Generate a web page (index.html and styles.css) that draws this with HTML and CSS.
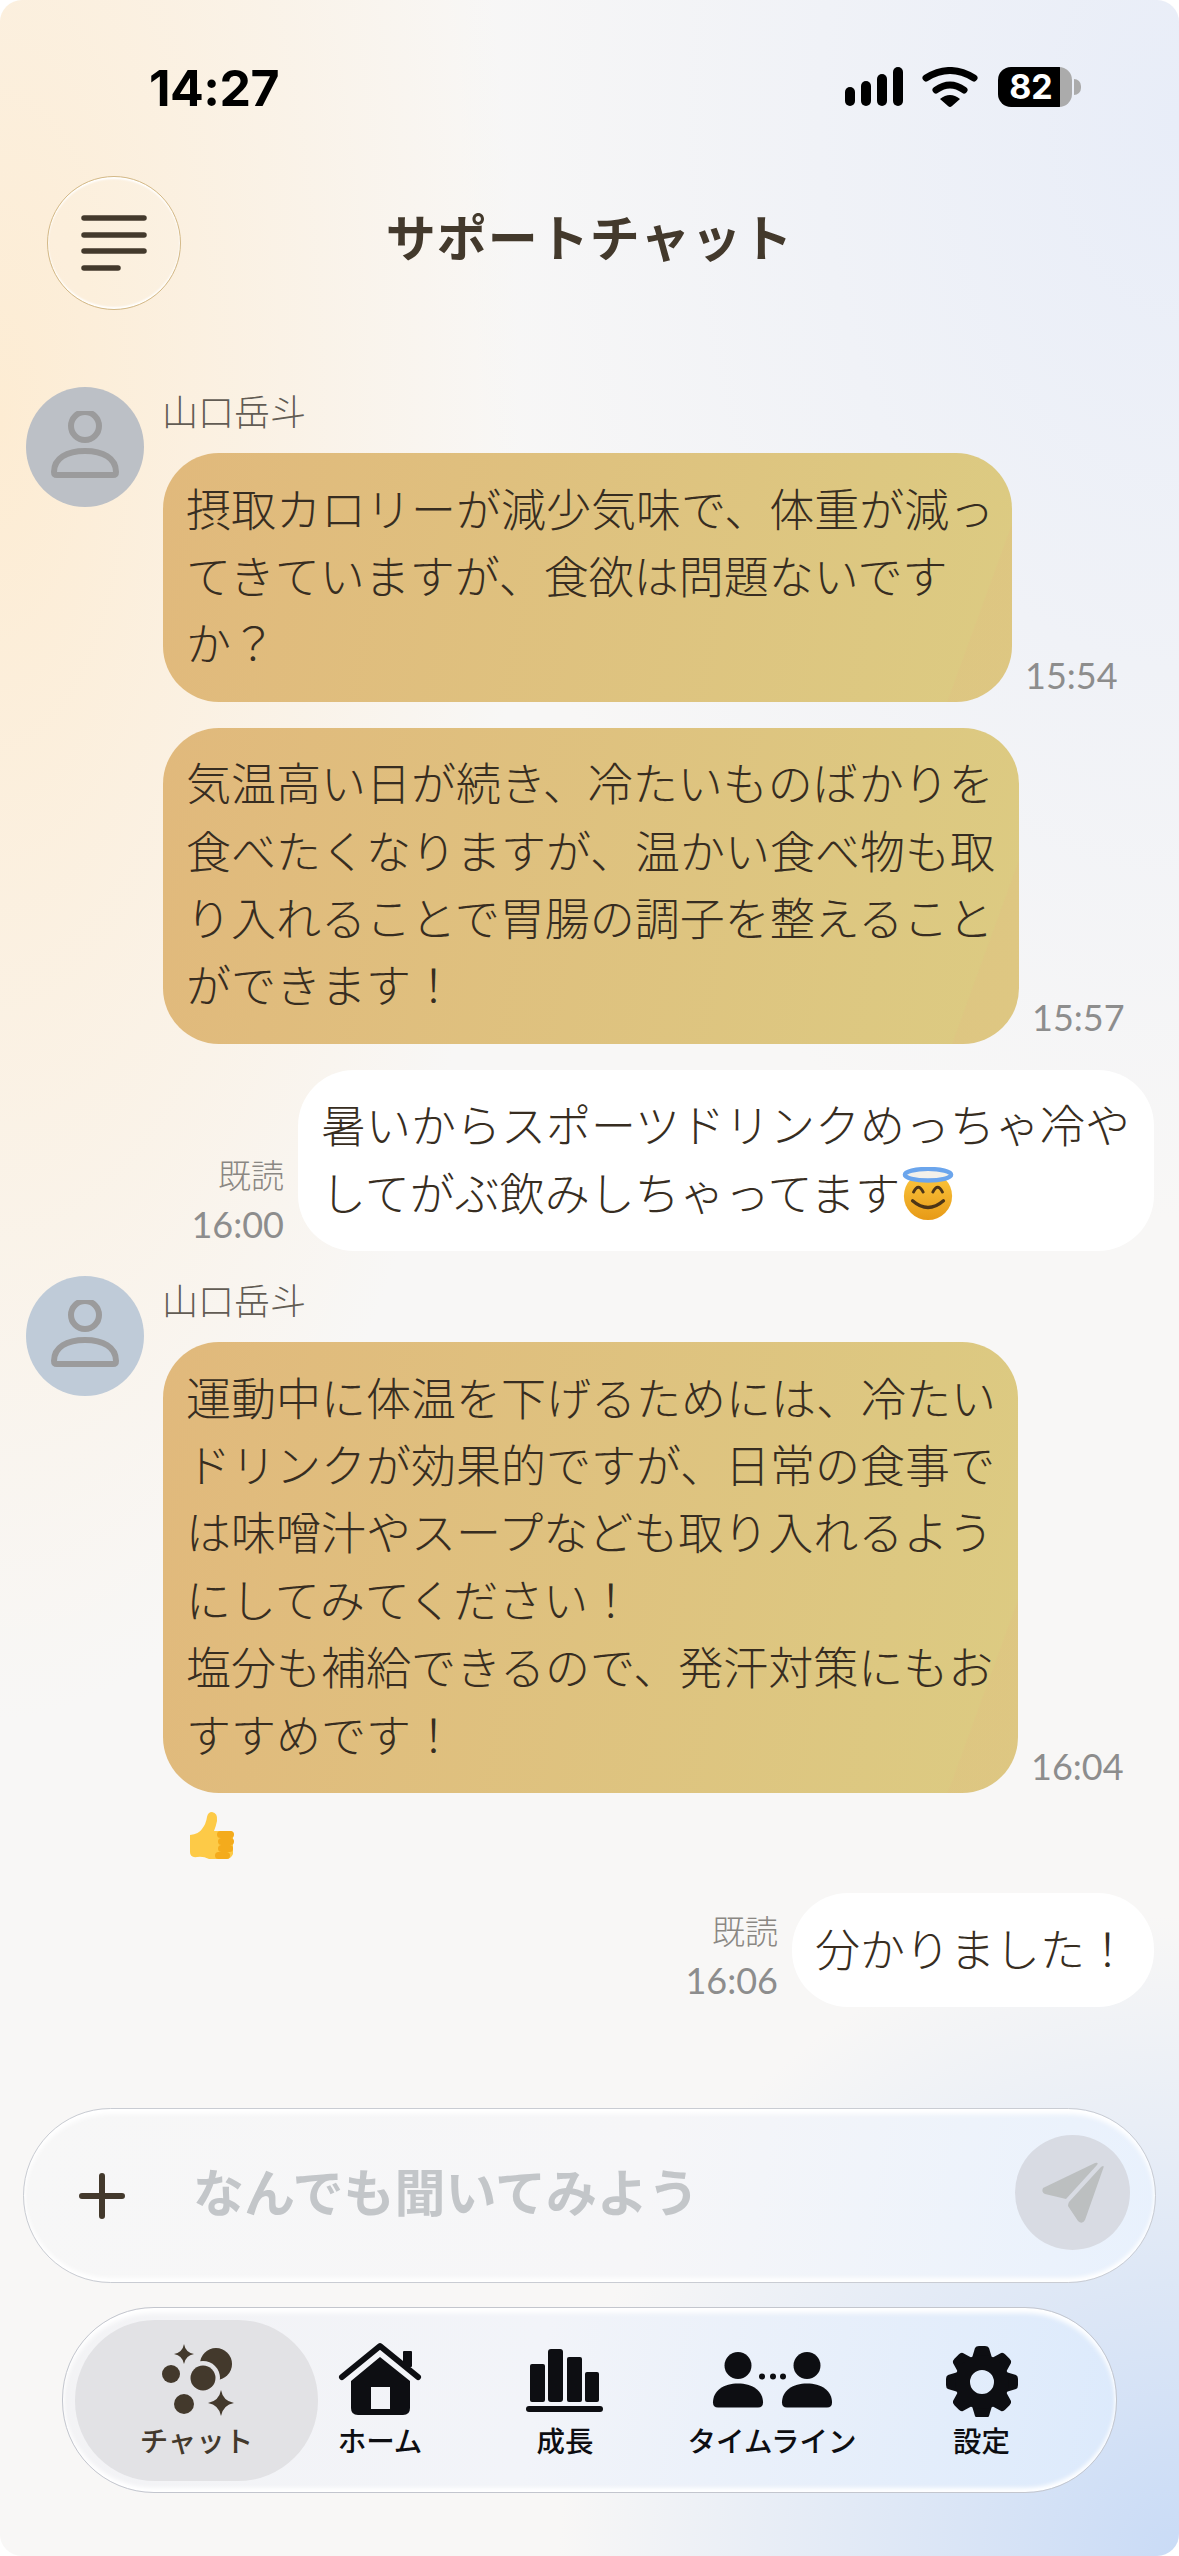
FILE: index.html
```html
<!DOCTYPE html>
<html lang="ja">
<head>
    <meta charset="utf-8">
    <title>サポートチャット</title>
    <link rel="stylesheet" href="styles.css">
</head>
<body>
    <div class="screen">
        <!-- ステータスバー -->
        <div class="status">
            <span class="clock">14:27</span>
            <div class="status-icons">
                <svg class="signal" width="58" height="40" viewBox="0 0 58 40">
                    <rect x="0" y="20" width="10" height="19" rx="5"/>
                    <rect x="16" y="14" width="10" height="25" rx="5"/>
                    <rect x="32" y="7" width="10" height="32" rx="5"/>
                    <rect x="48" y="0" width="10" height="39" rx="5"/>
                </svg>
                <svg class="wifi" width="56" height="40" viewBox="0 0 56 40">
                    <path d="M4 11Q28 -4 52 11" fill="none" stroke="#000" stroke-width="7" stroke-linecap="round"/>
                    <path d="M14 23Q28 13 42 23" fill="none" stroke="#000" stroke-width="7" stroke-linecap="round"/>
                    <path d="M18 32Q28 24 38 32L30 39Q28 41 26 39Z"/>
                </svg>
                <div class="battery"><span class="battery-level">82</span></div>
                <span class="battery-nub"></span>
            </div>
        </div>

        <!-- ヘッダー -->
        <header class="header">
            <button class="menu-btn">
                <svg width="66" height="58" viewBox="0 0 66 58">
                    <g stroke="#43392c" stroke-width="5.5" stroke-linecap="round">
                        <line x1="3" y1="4" x2="63" y2="4"/>
                        <line x1="3" y1="21" x2="63" y2="21"/>
                        <line x1="3" y1="37" x2="63" y2="37"/>
                        <line x1="3" y1="54" x2="37" y2="54"/>
                    </g>
                </svg>
            </button>
            <h1 class="title">サポートチャット</h1>
        </header>

        <!-- メッセージ一覧 -->
        <main class="chat">
            <div class="msg">
                <div class="avatar avatar-warm">
                    <svg width="72" height="72" viewBox="0 0 72 72" fill="none" stroke="#9b9b9c" stroke-width="6">
                        <circle cx="36" cy="15" r="14"/>
                        <path d="M5 61C5 47 18 40 36 40S67 47 67 61Q67 64 64 64H8Q5 64 5 61Z"/>
                    </svg>
                </div>
                <div class="msg-body">
                    <div class="name">山口岳斗</div>
                    <div class="bubble-row">
                        <div class="bubble coach w-849">摂取カロリーが減少気味で、体重が減っ<br>てきていますが、食欲は問題ないです<br>か？</div>
                        <span class="time">15:54</span>
                    </div>
                    <div class="bubble-row next">
                        <div class="bubble coach w-856">気温高い日が続き、冷たいものばかりを<br>食べたくなりますが、温かい食べ物も取<br>り入れることで胃腸の調子を整えること<br>ができます！</div>
                        <span class="time">15:57</span>
                    </div>
                </div>
            </div>

            <div class="mine">
                <div class="stamp"><span class="read">既読</span><span class="time">16:00</span></div>
                <div class="bubble me w-856">暑いからスポーツドリンクめっちゃ冷や<br>してがぶ飲みしちゃってます<svg class="emoji" width="54" height="54" viewBox="0 0 56 56">
                        <defs>
                            <linearGradient id="face" x1="0" y1="0" x2="0" y2="1">
                                <stop offset="0" stop-color="#fcc83f"/>
                                <stop offset="1" stop-color="#e79a17"/>
                            </linearGradient>
                        </defs>
                        <circle cx="28" cy="30" r="25" fill="url(#face)"/>
                        <path d="M13 26Q18 16 23 26M33 26Q38 16 43 26" fill="none" stroke="#4c3517" stroke-width="3" stroke-linecap="round"/>
                        <path d="M12 35Q28 49 44 35" fill="none" stroke="#4c3517" stroke-width="3.5" stroke-linecap="round"/>
                        <ellipse cx="28" cy="8" rx="24" ry="6" fill="#f3f1ea" stroke="#6ba5ec" stroke-width="4.5"/>
                    </svg></div>
            </div>

            <div class="msg">
                <div class="avatar avatar-cool">
                    <svg width="72" height="72" viewBox="0 0 72 72" fill="none" stroke="#9b9b9c" stroke-width="6">
                        <circle cx="36" cy="15" r="14"/>
                        <path d="M5 61C5 47 18 40 36 40S67 47 67 61Q67 64 64 64H8Q5 64 5 61Z"/>
                    </svg>
                </div>
                <div class="msg-body">
                    <div class="name">山口岳斗</div>
                    <div class="bubble-row">
                        <div class="bubble coach w-855">運動中に体温を下げるためには、冷たい<br>ドリンクが効果的ですが、日常の食事で<br>は味噌汁やスープなども取り入れるよう<br>にしてみてください！<br>塩分も補給できるので、発汗対策にもお<br>すすめです！</div>
                        <span class="time">16:04</span>
                    </div>
                    <div class="reaction">
                        <svg width="46" height="48" viewBox="0 0 46 48">
                            <path d="M1 23Q10 22 13 17Q17 12 18 5Q19 0 23 0Q29 1 28 9Q27 14 25 19H42Q45 20 44 25V42Q42 47 37 47H20Q14 44 8 45Q1 46 1 40Z" fill="#fdca47"/>
                            <g fill="#f4ab1c">
                                <rect x="28" y="19" width="17" height="7" rx="3.5"/>
                                <rect x="29" y="26" width="16" height="7" rx="3.5"/>
                                <rect x="29" y="33" width="15" height="7" rx="3.5"/>
                                <rect x="26" y="40" width="15" height="7" rx="3.5"/>
                            </g>
                        </svg>
                    </div>
                </div>
            </div>

            <div class="mine mine-last">
                <div class="stamp"><span class="read">既読</span><span class="time">16:06</span></div>
                <div class="bubble me">分かりました！</div>
            </div>
        </main>

        <!-- 入力欄 -->
        <div class="composer">
            <svg class="plus" width="46" height="46" viewBox="0 0 46 46">
                <path d="M23 3V43M3 23H43" stroke="#43392c" stroke-width="6" stroke-linecap="round"/>
            </svg>
            <span class="placeholder">なんでも聞いてみよう</span>
            <button class="send">
                <svg width="64" height="64" viewBox="0 0 64 64" fill="#bcbfc0">
                    <path d="M2 27Q0 31 4 33L25 38L56 4Q58 1 54 2Z"/>
                    <path d="M28 41L60 6Q64 3 62 8L44 59Q41 64 37 60L27 45Q27 43 28 41Z"/>
                </svg>
            </button>
        </div>

        <!-- タブバー -->
        <nav class="tabbar">
            <div class="tab tab-chat active">
                <svg width="76" height="76" viewBox="0 -3 76 76">
                    <g fill="#43392c">
                        <path d="M25 0Q26.5 8.5 35 10Q26.5 11.5 25 20Q23.5 11.5 15 10Q23.5 8.5 25 0Z"/>
                        <path d="M62 46Q64 57 75 59Q64 61 62 72Q60 61 49 59Q60 57 62 46Z"/>
                        <circle cx="57" cy="20" r="16"/>
                        <circle cx="44" cy="34" r="17" fill="#e2e2e5"/>
                        <circle cx="12" cy="30" r="9"/>
                        <circle cx="44" cy="34" r="12.5"/>
                        <circle cx="25" cy="60" r="10"/>
                    </g>
                </svg>
                <span>チャット</span>
            </div>
            <div class="tab tab-home">
                <svg width="84" height="76" viewBox="0 -1 84 76" fill="#0d0e12">
                    <path d="M4 35L42 4L80 35" fill="none" stroke="#0d0e12" stroke-width="6" stroke-linecap="round" stroke-linejoin="round"/>
                    <rect x="65" y="9" width="9" height="16" rx="1"/>
                    <path fill-rule="evenodd" d="M42 15L72 39V66Q72 73 65 73H20Q13 73 13 66V39ZM33 45V67H52V45Z"/>
                </svg>
                <span>ホーム</span>
            </div>
            <div class="tab tab-growth">
                <svg width="78" height="76" viewBox="0 -8 78 76" fill="#0d0e12">
                    <rect x="4" y="15" width="15" height="38" rx="2"/>
                    <rect x="22" y="0" width="15" height="53" rx="3"/>
                    <rect x="41" y="8" width="15" height="45" rx="2"/>
                    <rect x="59" y="23" width="14" height="30" rx="2"/>
                    <rect x="0" y="57" width="77" height="6" rx="3"/>
                </svg>
                <span>成長</span>
            </div>
            <div class="tab tab-timeline">
                <svg width="122" height="76" viewBox="0 -9.5 122 76" fill="#0d0e12">
                    <circle cx="27" cy="15" r="13.5"/>
                    <path d="M2 52C2 40 13 33 27 33S52 40 52 52Q52 57 47 57H7Q2 57 2 52Z"/>
                    <circle cx="96" cy="15" r="13.5"/>
                    <path d="M71 52C71 40 82 33 96 33S121 40 121 52Q121 57 116 57H76Q71 57 71 52Z"/>
                    <circle cx="51" cy="26" r="3"/>
                    <circle cx="62" cy="26" r="3"/>
                    <circle cx="72" cy="26" r="3"/>
                </svg>
                <span>タイムライン</span>
            </div>
            <div class="tab tab-setting">
                <svg width="76" height="76" viewBox="-38 -41 76 76">
                    <defs>
                        <path id="tooth" d="M-10 -24L-7 -34Q-6 -36 -3 -36H3Q6 -36 7 -34L10 -24Z"/>
                    </defs>
                    <g fill="#0d0e12">
                        <use href="#tooth"/>
                        <use href="#tooth" transform="rotate(45)"/>
                        <use href="#tooth" transform="rotate(90)"/>
                        <use href="#tooth" transform="rotate(135)"/>
                        <use href="#tooth" transform="rotate(180)"/>
                        <use href="#tooth" transform="rotate(225)"/>
                        <use href="#tooth" transform="rotate(270)"/>
                        <use href="#tooth" transform="rotate(315)"/>
                    </g>
                    <circle r="19.5" fill="none" stroke="#0d0e12" stroke-width="15"/>
                </svg>
                <span>設定</span>
            </div>
        </nav>
    </div>
</body>
</html>
```

FILE: styles.css
```css
* {
    box-sizing: border-box;
}
html, body {
    margin: 0;
    padding: 0;
    background: #fff;
}
body {
    font-family: "Noto Sans CJK JP", "Noto Sans", sans-serif;
    color: #43392c;
}
.screen {
    width: 1179px;
    height: 2556px;
    display: flex;
    flex-direction: column;
    overflow: hidden;
    border-radius: 22px;
    background:
        radial-gradient(ellipse 620px 640px at 100% 100%, #c9dbf6 0, rgba(201, 219, 246, 0) 100%),
        radial-gradient(ellipse 520px 1300px at 0 420px, #fdecd3 0, rgba(253, 236, 211, 0) 100%),
        radial-gradient(ellipse 720px 1100px at 100% 120px, #e8edf8 0, rgba(232, 237, 248, 0) 100%),
        #f8f7f6;
}

/* ステータスバー */
.status {
    height: 176px;
    flex-shrink: 0;
    display: flex;
    justify-content: space-between;
    padding: 57px 98px 0 149px;
}
.clock {
    font-family: Inter, "Liberation Sans", sans-serif;
    font-size: 50px;
    font-weight: 700;
    line-height: 62px;
    letter-spacing: -0.5px;
    color: #000;
}
.status-icons {
    display: flex;
    align-items: flex-start;
    padding-top: 10px;
}
.signal {
    margin-right: 19px;
}
.wifi {
    margin-right: 20px;
}
.battery {
    width: 74px;
    height: 40px;
    border-radius: 13px;
    background: linear-gradient(90deg, #000 0, #000 84%, #ababab 84%, #ababab 100%);
}
.battery-level {
    display: block;
    width: 66px;
    text-align: center;
    font-family: Inter, "Liberation Sans", sans-serif;
    font-size: 34px;
    font-weight: 700;
    line-height: 40px;
    color: #fff;
}
.battery-nub {
    width: 7px;
    height: 16px;
    margin: 12px 0 0 2px;
    border-radius: 0 8px 8px 0;
    background: #ababab;
}

/* ヘッダー */
.header {
    flex-shrink: 0;
    display: grid;
    grid-template-columns: 134px 1fr 134px;
    align-items: center;
    padding: 0 47px;
}
.menu-btn {
    width: 134px;
    height: 134px;
    padding: 0;
    display: flex;
    align-items: center;
    justify-content: center;
    border: 1.5px solid #d3b988;
    border-radius: 50%;
    background: rgba(255, 255, 255, 0.08);
    box-shadow: inset 0 2px 2px #fff, inset 0 -2px 2px #fff;
}
.title {
    margin: 0;
    padding-bottom: 16px;
    text-align: center;
    font-size: 50px;
    font-weight: 700;
    line-height: 70px;
    letter-spacing: 1px;
}

/* メッセージ */
.chat {
    flex: 1;
    padding: 77px 25px 0 26px;
}
.msg {
    display: flex;
    gap: 19px;
}
.avatar {
    width: 118px;
    height: 120px;
    flex-shrink: 0;
    display: flex;
    align-items: center;
    justify-content: center;
    border-radius: 50%;
}
.avatar-warm {
    background: #bcc0c6;
}
.avatar-cool {
    background: #bfcbd8;
}
.msg-body {
    flex: 1;
    min-width: 0;
}
.name {
    margin-left: -1px;
    font-size: 36px;
    font-weight: 300;
    line-height: 46px;
    height: 66px;
    color: #625c54;
}
.bubble-row {
    display: flex;
    align-items: flex-end;
    gap: 13px;
}
.bubble-row.next {
    margin-top: 26px;
}
.bubble {
    padding: 20.5px 0 26px 23px;
    border-radius: 56px;
    font-size: 45px;
    font-weight: 300;
    line-height: 67.4px;
    white-space: nowrap;
    color: #372d21;
}
.coach {
    background:
        linear-gradient(110deg, rgba(0, 0, 0, 0) 93%, rgba(225, 190, 130, 0.3) 93.2%),
        linear-gradient(100deg, #e1b97c 0, #dccb82 100%);
}
.me {
    background: #fff;
    padding-right: 24px;
}
.w-849 {
    width: 849px;
}
.w-855 {
    width: 855px;
}
.w-856 {
    width: 856px;
}
.time {
    font-family: Lato, "Liberation Sans", sans-serif;
    font-size: 36px;
    line-height: 40px;
    padding-bottom: 7px;
    color: #8d8d8d;
}
.mine {
    display: flex;
    justify-content: flex-end;
    align-items: flex-end;
    gap: 14px;
    margin: 26px 0 25px;
}
.mine-last {
    margin: 33px 0 0;
}
.stamp {
    display: flex;
    flex-direction: column;
    align-items: flex-end;
}
.stamp .read {
    font-size: 33px;
    font-weight: 300;
    line-height: 42px;
    height: 51px;
    color: #8a8783;
}
.stamp .time {
    padding-bottom: 7px;
}
.emoji {
    vertical-align: -10px;
    margin-left: 1px;
}
.reaction {
    height: 48px;
    margin: 19px 0 0 26px;
}

/* 入力欄 */
.composer {
    flex-shrink: 0;
    width: 1133px;
    height: 175px;
    margin-left: 23px;
    display: flex;
    align-items: center;
    padding: 0 25px 0 55px;
    border: 1.5px solid #c9ccd3;
    border-radius: 88px;
    background: linear-gradient(100deg, #f7f7f7 0, #f6f6f8 55%, #e8f1fd 100%);
    box-shadow: inset 0 5px 5px #fff, inset 0 -4px 4px #fff;
}
.plus {
    flex-shrink: 0;
}
.placeholder {
    margin-left: 68px;
    padding-bottom: 12px;
    flex: 1;
    font-size: 51px;
    font-weight: 700;
    line-height: 70px;
    color: #c3c6c9;
}
.send {
    width: 115px;
    height: 115px;
    margin-bottom: 6px;
    padding: 0;
    display: flex;
    align-items: center;
    justify-content: center;
    border: 0;
    border-radius: 50%;
    background: #d8dbe3;
}

/* タブバー */
.tabbar {
    flex-shrink: 0;
    width: 1055px;
    height: 186px;
    margin: 24px 0 63px 62px;
    display: flex;
    align-items: center;
    padding: 0 0 0 12px;
    border: 1.5px solid #c3c6ce;
    border-radius: 92px;
    background: linear-gradient(100deg, #f3f3f5 0, #f2f4f9 45%, #dceafc 100%);
    box-shadow: inset 0 5px 5px #fff, inset 0 -4px 4px #fff;
}
.tab {
    height: 161px;
    flex-shrink: 0;
    display: flex;
    flex-direction: column;
    align-items: center;
    padding-top: 21px;
    font-size: 28.5px;
    font-weight: 500;
    line-height: 40px;
    white-space: nowrap;
    color: #0d0e12;
}
.tab svg {
    flex-shrink: 0;
}
.tab span {
    margin-top: 3px;
}
.tab.active {
    color: #43392c;
    background: #e2e2e5;
    border-radius: 80px;
}
.tab-chat {
    width: 243px;
}
.tab-home {
    width: 124px;
}
.tab-growth {
    width: 246px;
}
.tab-timeline {
    width: 168px;
}
.tab-setting {
    width: 251px;
}
```
